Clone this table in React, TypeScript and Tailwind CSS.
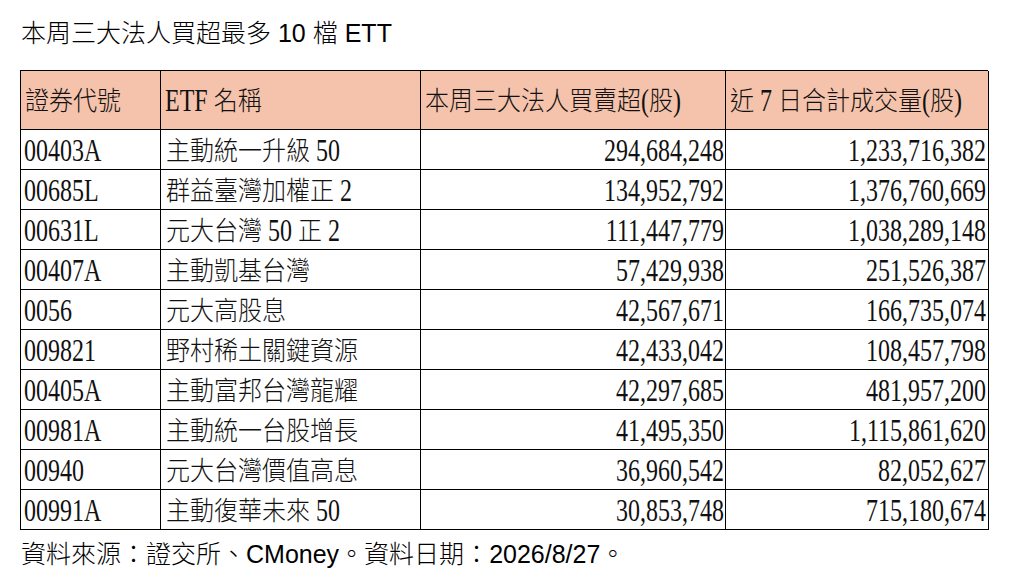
import React from "react";

const rows: [string, string, string, string][] = [
  ["00403A", "主動統一升級 50", "294,684,248", "1,233,716,382"],
  ["00685L", "群益臺灣加權正 2", "134,952,792", "1,376,760,669"],
  ["00631L", "元大台灣 50 正 2", "111,447,779", "1,038,289,148"],
  ["00407A", "主動凱基台灣", "57,429,938", "251,526,387"],
  ["0056", "元大高股息", "42,567,671", "166,735,074"],
  ["009821", "野村稀土關鍵資源", "42,433,042", "108,457,798"],
  ["00405A", "主動富邦台灣龍耀", "42,297,685", "481,957,200"],
  ["00981A", "主動統一台股增長", "41,495,350", "1,115,861,620"],
  ["00940", "元大台灣價值高息", "36,960,542", "82,052,627"],
  ["00991A", "主動復華未來 50", "30,853,748", "715,180,674"],
];

const serif = "font-['Liberation_Serif','Noto_Sans_CJK_TC',serif]";
const sans = "font-['Liberation_Sans','Noto_Sans_CJK_TC',sans-serif]";

function Txt({ children }: { children: string }) {
  const parts = children.split(/([\u0000-\u024F]+)/).filter((p) => p.length);
  return (
    <span className="whitespace-pre">
      {parts.map((p, i) =>
        /^[\u0000-\u024F]+$/.test(p) ? (
          <span key={i} className="inline-block scale-y-[1.3] whitespace-pre">
            {p}
          </span>
        ) : (
          <span key={i} className="inline-block scale-y-[1.08] font-light whitespace-pre">
            {p}
          </span>
        )
      )}
    </span>
  );
}

function Plain({ children }: { children: string }) {
  const parts = children.split(/([\u0000-\u024F]+)/).filter((p) => p.length);
  return (
    <>
      {parts.map((p, i) =>
        /^[\u0000-\u024F]+$/.test(p) ? (
          <span key={i} className="whitespace-pre">
            {p}
          </span>
        ) : (
          <span key={i} className="font-light whitespace-pre">
            {p}
          </span>
        )
      )}
    </>
  );
}

export default function App() {
  return (
    <div className="w-[1011px] h-[581px] bg-white text-black overflow-hidden">
      <div className={`pl-[21px] pt-[17px] h-[70px] text-[25px] leading-[32px] ${sans} text-black`}>
        <Plain>本周三大法人買超最多 10 檔 ETT</Plain>
      </div>
      <div
        className={`ml-[20px] w-[968px] grid grid-cols-[140px_260px_305px_263px] border-l border-t border-black text-[24px] leading-none text-[#111] ${serif}`}
      >
        {["證券代號", "ETF 名稱", "本周三大法人買賣超(股)", "近 7 日合計成交量(股)"].map((h) => (
          <div
            key={h}
            className="h-[59px] bg-[#f5c3ab] border-r border-b border-black flex items-center pl-[4px] pt-[1px]"
          >
            <Txt>{h}</Txt>
          </div>
        ))}
        {rows.map((r) => (
          <React.Fragment key={r[0]}>
            <div className="h-[40px] border-r border-b border-black flex items-center pl-[3px] pt-[2px]">
              <Txt>{r[0]}</Txt>
            </div>
            <div className="h-[40px] border-r border-b border-black flex items-center pl-[5px] pt-[2px]">
              <Txt>{r[1]}</Txt>
            </div>
            <div className="h-[40px] border-r border-b border-black flex items-center justify-end pr-[1px] pt-[2px]">
              <Txt>{r[2]}</Txt>
            </div>
            <div className="h-[40px] border-r border-b border-black flex items-center justify-end pr-[2px] pt-[2px]">
              <Txt>{r[3]}</Txt>
            </div>
          </React.Fragment>
        ))}
      </div>
      <div className={`pl-[21px] pt-[8px] text-[25px] leading-[32px] ${sans} text-black`}>
        <Plain>資料來源：證交所、CMoney。資料日期：2026/8/27。</Plain>
      </div>
    </div>
  );
}
